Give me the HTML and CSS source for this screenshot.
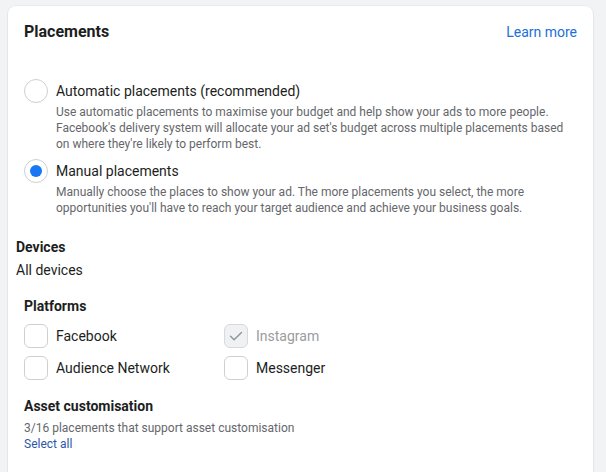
FILE: index.html
```html
<!DOCTYPE html>
<html lang="en">
<head>
<meta charset="utf-8">
<title>Placements</title>
<link rel="stylesheet" href="styles.css">
</head>
<body>
<div class="card">
  <div class="header">
    <h2 class="title">Placements</h2>
    <a class="learn" href="#">Learn more</a>
  </div>

  <div class="radios">
    <div class="option">
      <span class="radio"></span>
      <div class="option-body">
        <div class="option-title">Automatic placements (recommended)</div>
        <div class="option-desc">Use automatic placements to maximise your budget and help show your ads to more people. Facebook's delivery system will allocate your ad set's budget across multiple placements based on where they're likely to perform best.</div>
      </div>
    </div>
    <div class="option">
      <span class="radio checked"></span>
      <div class="option-body">
        <div class="option-title">Manual placements</div>
        <div class="option-desc">Manually choose the places to show your ad. The more placements you select, the more opportunities you'll have to reach your target audience and achieve your business goals.</div>
      </div>
    </div>
  </div>

  <div class="devices">
    <div class="label-bold">Devices</div>
    <div class="devices-value">All devices</div>
  </div>

  <div class="platforms">
    <div class="label-bold">Platforms</div>
    <div class="checks">
      <label class="check"><span class="box"></span><span>Facebook</span></label>
      <label class="check disabled"><span class="box"><svg width="16" height="16" viewBox="0 0 16 16"><path d="M2.5 8.2l3.6 3.6L13.5 4.4" fill="none" stroke="#8d949e" stroke-width="1.4" stroke-linecap="round" stroke-linejoin="round"/></svg></span><span>Instagram</span></label>
      <label class="check"><span class="box"></span><span>Audience Network</span></label>
      <label class="check"><span class="box"></span><span>Messenger</span></label>
    </div>
  </div>

  <div class="asset">
    <div class="label-bold">Asset customisation</div>
    <div class="asset-desc">3/16 placements that support asset customisation</div>
    <a class="select-all" href="#">Select all</a>
  </div>
</div>
</body>
</html>
```

FILE: styles.css
```css
* { box-sizing: border-box; }

html, body {
  margin: 0;
  padding: 0;
  background: #f2f3f5;
  font-family: Roboto, "Liberation Sans", Arial, sans-serif;
  color: #1c1e21;
}

body {
  padding: 6px 13px 0 8px;
  height: 472px;
  overflow: hidden;
}

.card {
  background: #fff;
  border-radius: 8px 8px 0 0;
  box-shadow: 0 0 0 1px rgba(0,0,0,0.03), 0 1px 2px rgba(0,0,0,0.08);
  padding: 16px 8px 0;
  height: 466px;
}

.header {
  display: flex;
  justify-content: space-between;
  align-items: center;
  padding: 0 8px;
  height: 20px;
}

.title {
  margin: 0;
  font-size: 16px;
  font-weight: 700;
  line-height: 20px;
  color: #1c1e21;
}

.learn {
  font-size: 14px;
  line-height: 20px;
  color: #1b6fd9;
  text-decoration: none;
}

.radios {
  margin-top: 39px;
  padding: 0 8px;
  display: flex;
  flex-direction: column;
  gap: 9px;
}

.option {
  display: flex;
  gap: 8px;
  align-items: flex-start;
}

.radio {
  flex: none;
  width: 24px;
  height: 24px;
  border: 1px solid #ccd0d5;
  border-radius: 50%;
  margin-top: -2px;
  display: flex;
  align-items: center;
  justify-content: center;
}

.radio.checked::after {
  content: "";
  width: 12px;
  height: 12px;
  border-radius: 50%;
  background: #1877f2;
}

.option-title {
  font-size: 14px;
  line-height: 20px;
  color: #1c1e21;
}

.option-desc {
  margin-top: 3px;
  font-size: 12px;
  line-height: 16px;
  color: #65676b;
}

.devices {
  margin-top: 22px;
}

.label-bold {
  font-size: 14px;
  font-weight: 700;
  line-height: 18px;
  color: #1c1e21;
}

.devices-value {
  margin-top: 5px;
  font-size: 14px;
  line-height: 18px;
}

.platforms {
  margin-top: 18px;
  padding-left: 8px;
}

.checks {
  margin-top: 9px;
  display: grid;
  grid-template-columns: 200px 200px;
  row-gap: 8px;
}

.check {
  display: flex;
  align-items: center;
  gap: 8px;
  font-size: 14px;
  line-height: 24px;
  color: #1c1e21;
}

.box {
  width: 24px;
  height: 24px;
  border: 1px solid #ccd0d5;
  border-radius: 6px;
  display: flex;
  align-items: center;
  justify-content: center;
  background: #fff;
}

.check.disabled { color: #9a9ca0; }
.check.disabled .box { background: #f0f1f2; border-color: #d6d9dd; }

.asset {
  margin-top: 17px;
  padding-left: 8px;
}

.asset-desc {
  margin-top: 5px;
  font-size: 12px;
  line-height: 16px;
  color: #65676b;
}

.select-all {
  display: block;
  font-size: 12px;
  line-height: 16px;
  color: #2d58a8;
  text-decoration: none;
}
```
